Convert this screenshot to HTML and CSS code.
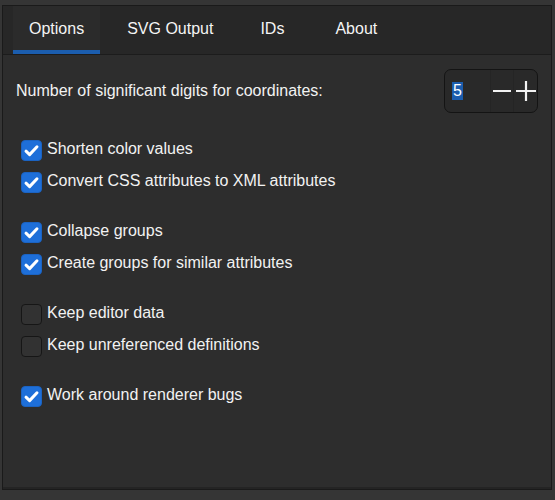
FILE: index.html
```html
<!DOCTYPE html>
<html>
<head>
<meta charset="utf-8">
<link rel="stylesheet" href="styles.css">
</head>
<body>
<div class="window">
  <div class="tabbar">
    <div class="tab active">Options</div>
    <div class="tab">SVG Output</div>
    <div class="tab">IDs</div>
    <div class="tab">About</div>
  </div>
  <div class="content">
    <div class="digits-row">
      <span class="label">Number of significant digits for coordinates:</span>
      <div class="spin">
        <div class="spin-value"><span class="sel">5</span></div>
        <div class="spin-btn">
          <svg width="18" height="18" viewBox="0 0 18 18"><path d="M0 9H18" stroke="#f2f2f2" stroke-width="2.2"/></svg>
        </div>
        <div class="spin-btn plus">
          <svg width="20" height="20" viewBox="0 0 20 20"><path d="M0 10H20M10 0V20" stroke="#f2f2f2" stroke-width="2.2"/></svg>
        </div>
      </div>
    </div>

    <div class="group first">
      <div class="opt"><span class="box on"><svg viewBox="0 0 21 21" width="21" height="21"><path d="M5 11.2L8.6 14.6L16 6.8" fill="none" stroke="#fff" stroke-width="3" stroke-linecap="round" stroke-linejoin="round"/></svg></span><span>Shorten color values</span></div>
      <div class="opt"><span class="box on"><svg viewBox="0 0 21 21" width="21" height="21"><path d="M5 11.2L8.6 14.6L16 6.8" fill="none" stroke="#fff" stroke-width="3" stroke-linecap="round" stroke-linejoin="round"/></svg></span><span>Convert CSS attributes to XML attributes</span></div>
    </div>
    <div class="group">
      <div class="opt"><span class="box on"><svg viewBox="0 0 21 21" width="21" height="21"><path d="M5 11.2L8.6 14.6L16 6.8" fill="none" stroke="#fff" stroke-width="3" stroke-linecap="round" stroke-linejoin="round"/></svg></span><span>Collapse groups</span></div>
      <div class="opt"><span class="box on"><svg viewBox="0 0 21 21" width="21" height="21"><path d="M5 11.2L8.6 14.6L16 6.8" fill="none" stroke="#fff" stroke-width="3" stroke-linecap="round" stroke-linejoin="round"/></svg></span><span>Create groups for similar attributes</span></div>
    </div>
    <div class="group">
      <div class="opt"><span class="box"></span><span>Keep editor data</span></div>
      <div class="opt"><span class="box"></span><span>Keep unreferenced definitions</span></div>
    </div>
    <div class="group">
      <div class="opt"><span class="box on"><svg viewBox="0 0 21 21" width="21" height="21"><path d="M5 11.2L8.6 14.6L16 6.8" fill="none" stroke="#fff" stroke-width="3" stroke-linecap="round" stroke-linejoin="round"/></svg></span><span>Work around renderer bugs</span></div>
    </div>
  </div>
</div>
</body>
</html>
```
FILE: styles.css
```css
html, body {
  margin: 0;
  padding: 0;
  background: #353535;
  font-family: "Liberation Sans", Arial, sans-serif;
  font-size: 16px;
  color: #f2f2f2;
}
.window {
  box-sizing: border-box;
  margin: 5px 3px 0 2px;
  height: 485px;
  border: 1px solid #1a1a1a;
  box-shadow: inset 0 -2px 0 #242424;
  background: #2d2d2d;
}
.tabbar {
  display: flex;
  height: 48px;
  background: #272727;
  border-bottom: 1px solid #1c1c1c;
  padding-left: 10px;
  gap: 11px;
}
.tab {
  box-sizing: border-box;
  display: flex;
  align-items: center;
  justify-content: center;
  padding: 0 16px 2px;
  min-width: 64px;
  color: #f4f4f4;
}
.tab:last-child {
  margin-left: 4px;
}
.tab.active {
  background: #2b2b2b;
  border-bottom: 4px solid #1b5dae;
  padding-top: 2px;
  padding-bottom: 0;
}
.content {
  padding: 14px 13px 0 13px;
}
.digits-row {
  display: flex;
  justify-content: space-between;
  align-items: center;
  height: 44px;
}
.spin {
  box-sizing: border-box;
  width: 94px;
  height: 44px;
  border: 1.5px solid #141414;
  border-radius: 7px;
  background: #292929;
  display: flex;
  overflow: hidden;
}
.spin-value {
  flex: 1;
  display: flex;
  align-items: center;
  padding-left: 7px;
}
.sel {
  background: #1b5dae;
  color: #fff;
  line-height: 18px;
  padding: 0 1px;
}
.spin-btn {
  width: 22px;
  display: flex;
  align-items: center;
  justify-content: center;
  border-left: 1px solid #252525;
}
.spin-btn.plus {
  width: 23px;
}
.group {
  margin-top: 18px;
}
.group.first {
  margin-top: 21px;
}
.opt {
  display: flex;
  align-items: center;
  height: 32px;
  padding-left: 5px;
  gap: 5px;
}
.opt span:last-child {
  position: relative;
  top: -1px;
}
.box {
  box-sizing: border-box;
  width: 21px;
  height: 21px;
  border-radius: 4px;
  border: 1px solid #161616;
  background: #323232;
  flex: none;
  display: block;
}
.box.on {
  background: #1e6fd9;
  border-color: #1b63c2;
}
.box svg {
  display: block;
  margin: -1px;
}
```
